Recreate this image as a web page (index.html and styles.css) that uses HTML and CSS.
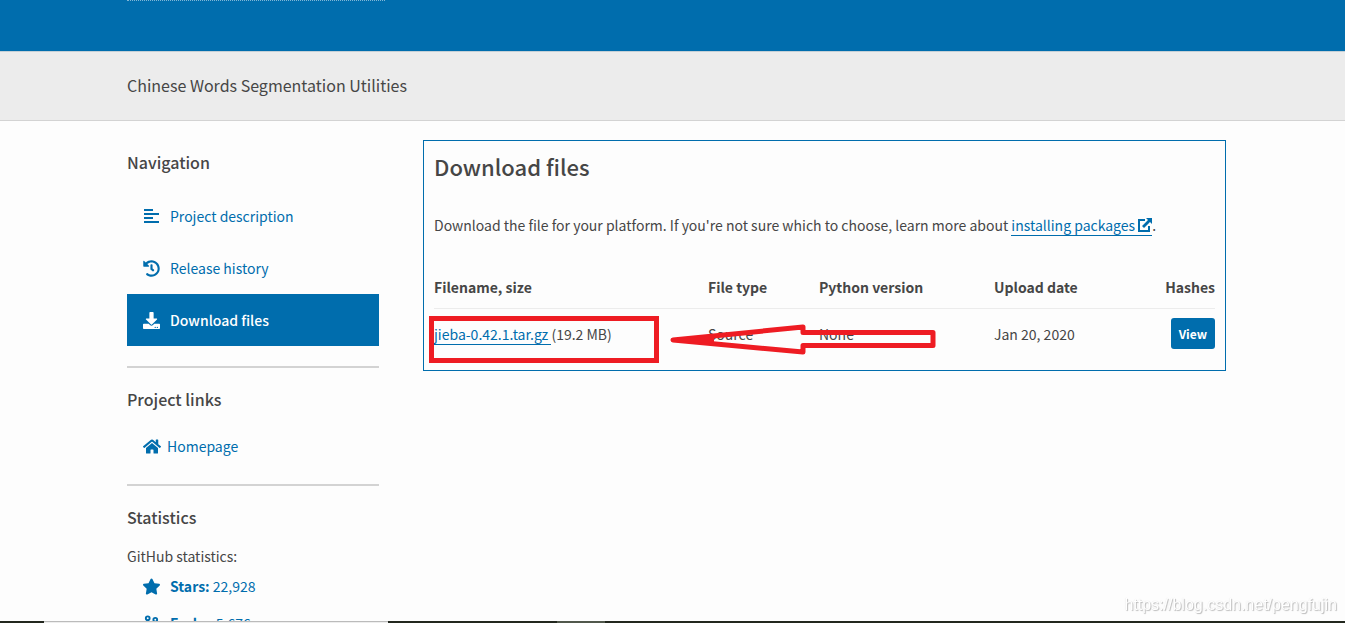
FILE: index.html
```html
<!DOCTYPE html>
<html lang="en">
<head>
<meta charset="utf-8">
<title>jieba · Download files</title>
<link rel="stylesheet" href="styles.css">
</head>
<body>
<header class="banner"><div class="container"><div class="banner-rule"></div></div></header>
<div class="summary"><div class="container"><p class="summary-text">Chinese Words Segmentation Utilities</p></div></div>
<div class="container layout">
  <aside class="sidebar">
    <section class="side-section">
      <h2 class="side-title">Navigation</h2>
      <nav class="tabs">
        <a class="tab" href="#description"><svg class="icon" viewBox="0 0 17 17"><path d="M1 2h9M1 6h15M1 10h9M1 14h15" stroke="currentColor" stroke-width="2" fill="none"/></svg>Project description</a>
        <a class="tab" href="#history"><svg class="icon" viewBox="0 0 512 512"><path fill="currentColor" d="M504 255.531c.253 136.640-111.180 248.372-247.820 248.468-59.015.042-113.223-20.530-155.822-54.911-11.077-8.940-11.905-25.541-1.839-35.607l11.267-11.267c8.609-8.609 22.353-9.551 31.891-1.984C173.062 425.135 212.781 440 256 440c101.705 0 184-82.311 184-184 0-101.705-82.311-184-184-184-48.814 0-93.149 18.969-126.068 49.932l50.754 50.754c10.080 10.080 2.941 27.314-11.313 27.314H24c-8.837 0-16-7.163-16-16V38.627c0-14.254 17.234-21.393 27.314-11.314l49.372 49.372C129.209 34.136 189.552 8 256 8c136.810 0 247.747 110.780 248 247.531zm-180.912 78.784l9.823-12.630c8.138-10.463 6.253-25.542-4.210-33.679L288 256.349V152c0-13.255-10.745-24-24-24h-16c-13.255 0-24 10.745-24 24v135.651l65.409 50.874c10.463 8.137 25.541 6.253 33.679-4.210z"/></svg>Release history</a>
        <a class="tab tab-active" href="#files"><svg class="icon" viewBox="0 0 512 512"><path fill="currentColor" d="M216 0h80c13.300 0 24 10.700 24 24v168h87.700c17.800 0 26.700 21.500 14.100 34.100L269.700 378.300c-7.500 7.500-19.800 7.500-27.300 0L90.100 226.100c-12.600-12.600-3.700-34.100 14.100-34.100H192V24c0-13.300 10.700-24 24-24zm296 376v112c0 13.300-10.700 24-24 24H24c-13.300 0-24-10.700-24-24V376c0-13.300 10.700-24 24-24h146.700l49 49c20.100 20.100 52.500 20.100 72.600 0l49-49H488c13.300 0 24 10.700 24 24zm-124 88c0-11-9-20-20-20s-20 9-20 20 9 20 20 20 20-9 20-20zm64 0c0-11-9-20-20-20s-20 9-20 20 9 20 20 20 20-9 20-20z"/></svg>Download files</a>
      </nav>
    </section>
    <section class="side-section">
      <h2 class="side-title">Project links</h2>
      <a class="project-link" href="#home"><svg class="icon icon-home" viewBox="0 0 576 512"><path fill="currentColor" d="M280.370 148.260L96 300.110V464a16 16 0 0 0 16 16l112.060-.29a16 16 0 0 0 15.920-16V368a16 16 0 0 1 16-16h64a16 16 0 0 1 16 16v95.640a16 16 0 0 0 16 16.050L464 480a16 16 0 0 0 16-16V300L295.670 148.260a12.190 12.190 0 0 0-15.300 0zM571.600 251.470L488 182.560V44.050a12 12 0 0 0-12-12h-56a12 12 0 0 0-12 12v72.610L318.470 43a48 48 0 0 0-61 0L4.340 251.470a12 12 0 0 0-1.600 16.900l25.500 31A12 12 0 0 0 45.150 301l235.220-193.740a12.190 12.190 0 0 1 15.300 0L530.900 301a12 12 0 0 0 16.900-1.600l25.500-31a12 12 0 0 0-1.700-16.930z"/></svg>Homepage</a>
    </section>
    <section class="side-section">
      <h2 class="side-title">Statistics</h2>
      <p class="stat-label">GitHub statistics:</p>
      <a class="stat" href="#stars"><svg class="icon" viewBox="20 0 536 512"><path fill="currentColor" d="M259.300 17.800L194 150.200 47.900 171.500c-26.200 3.800-36.700 36.100-17.700 54.600l105.700 103-25 145.500c-4.500 26.300 23.200 46 46.400 33.700L288 439.600l130.700 68.700c23.200 12.200 50.900-7.400 46.400-33.700l-25-145.500 105.700-103c19-18.500 8.500-50.800-17.700-54.600L382 150.200 316.700 17.800c-11.700-23.600-45.600-23.900-57.400 0z"/></svg><span><strong>Stars:</strong> 22,928</span></a>
      <a class="stat" href="#forks"><svg class="icon" viewBox="0 0 18 18"><g fill="none" stroke="currentColor" stroke-width="2"><circle cx="5" cy="3.500" r="2"/><circle cx="13" cy="5" r="2"/><circle cx="5" cy="15" r="2"/><path d="M5 5v8M13 7c0 4-8 2-8 6"/></g></svg><span><strong>Forks:</strong> 5,676</span></a>
    </section>
  </aside>
  <main class="panel">
    <h1 class="panel-title">Download files</h1>
    <p class="intro">Download the file for your platform. If you're not sure which to choose, learn more about <a class="underlined" href="#installing">installing packages <svg class="icon-external" viewBox="0 0 14 14"><path d="M7 2H1v11h10V8" fill="none" stroke="currentColor" stroke-width="2"/><path d="M8 0h6v6l-2-2-6 6-2-2 6-6z" fill="currentColor"/></svg></a>.</p>
    <table class="files">
      <colgroup><col class="col-name"><col class="col-type"><col class="col-python"><col class="col-date"><col></colgroup>
      <thead><tr><th>Filename, size</th><th>File type</th><th>Python version</th><th>Upload date</th><th class="end">Hashes</th></tr></thead>
      <tbody><tr><td><a class="underlined" href="#file">jieba-0.42.1.tar.gz </a>(19.2 MB)</td><td>Source</td><td>None</td><td>Jan 20, 2020</td><td class="end"><button class="view" type="button">View</button></td></tr></tbody>
    </table>
    <div class="highlight"></div>
    <svg class="arrow" viewBox="0 0 268 32"><path d="M133 4L3 17L133 29V22.500H263V9.500H133Z" fill="none" stroke="#ee1c23" stroke-width="5" stroke-linejoin="round"/><path d="M3 17L44 12V21Z" fill="#ee1c23"/></svg>
  </main>
</div>
<div class="watermark">https://blog.csdn.net/pengfujin</div>
<div class="taskbar"><span class="taskbar-status"></span><span class="taskbar-item"></span></div>
</body>
</html>
```
FILE: styles.css
```css
* { box-sizing: border-box; }
body {
  margin: 0;
  height: 100vh;
  overflow: hidden;
  background: #fdfdfd;
  color: #464646;
  font: 14px/24px "Noto Sans CJK SC", "Open Sans", sans-serif;
}
h1, h2, p { margin: 0; font-weight: 500; }
a { color: #006dad; text-decoration: none; }
.container { max-width: 1107px; margin: 0 auto; padding-left: 8px; }
.banner { height: 51px; background: #006dad; }
.banner-rule { width: 258px; border-top: 1px dotted #80b6d6; }
.summary {
  padding: 21px 0 23px;
  background: #ececec;
  border-top: 1px solid #c5d0d6;
  border-bottom: 1px solid #d3d3d3;
}
.summary-text { font-size: 16px; font-weight: 400; }
.layout { display: flex; align-items: flex-start; gap: 44px; padding-top: 19px; }
.sidebar { flex: 0 0 252px; padding-top: 9px; }
.side-section + .side-section { border-top: 2px solid #d3d3d3; margin-top: 20px; padding-top: 18px; }
.side-title { font-size: 16px; line-height: 26px; }
.tabs { padding-top: 15px; }
.tab { display: flex; align-items: center; gap: 10px; height: 52px; padding: 0 16px; }
.tab-active { background: #006dad; color: #fff; font-weight: 500; }
.icon { width: 17px; height: 17px; flex: none; }
.icon-home { width: 18px; }
.project-link { display: flex; align-items: center; gap: 6px; padding: 22px 16px 6px; }
.stat-label { font-weight: 400; padding-top: 14px; }
.stat { display: flex; align-items: center; gap: 10px; padding: 6px 16px; }
.stat + .stat { padding-top: 7px; }
.panel {
  position: relative;
  flex: 1;
  min-width: 0;
  padding: 10px 10px 11px;
  border: 1px solid #006dad;
}
.panel-title { font-size: 22px; line-height: 30px; }
.intro { padding-top: 32px; font-weight: 400; }
.underlined { border-bottom: 1px solid #006dad; }
.icon-external { width: 14px; height: 14px; vertical-align: -1px; }
.files { width: 100%; margin-top: 34px; border-collapse: collapse; table-layout: fixed; }
.files th, .files td { padding: 0; text-align: left; }
.files th { height: 37px; padding-bottom: 4px; font-weight: 700; border-bottom: 1px solid #ececec; }
.files td { height: 51px; }
.files .end { text-align: right; }
.col-name { width: 274px; }
.col-type { width: 111px; }
.col-python { width: 175px; }
.col-date { width: 130px; }
.view {
  padding: 4px 8px;
  border: 0;
  border-radius: 3px;
  background: #006dad;
  color: #fff;
  font: 700 12px/23px "Noto Sans CJK SC", "Open Sans", sans-serif;
}
.highlight {
  position: absolute;
  left: 5px;
  top: 175px;
  width: 230px;
  height: 47px;
  border: 5px solid #ee1c23;
}
.arrow { position: absolute; left: 246px; top: 182px; width: 268px; height: 32px; }
.watermark {
  position: fixed;
  right: 8px;
  bottom: 8px;
  font: 16px/20px "Liberation Sans", sans-serif;
  color: #fff;
  text-shadow: 1px 1px 1px #bbb, 0 0 1px #ddd;
}
.taskbar { position: fixed; left: 0; right: 0; bottom: 0; height: 2px; background: #22271e; }
.taskbar-status, .taskbar-item { position: absolute; top: 0; height: 2px; }
.taskbar-status { left: 44px; width: 344px; background: #eee; border-top: 1px solid #bbb; }
.taskbar-item { left: 557px; width: 48px; background: #51584c; }
```
